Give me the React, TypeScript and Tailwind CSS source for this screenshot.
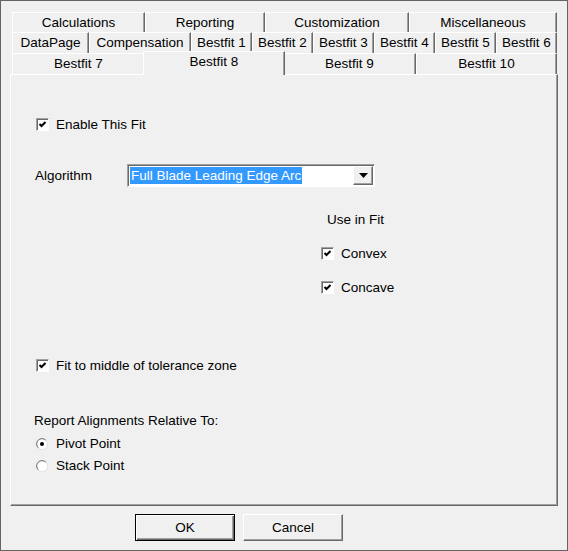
import React from 'react';

type Tab = { label: string; w: number; selected?: boolean };

const rows: Tab[][] = [
  [
    { label: 'Calculations', w: 133 },
    { label: 'Reporting', w: 120 },
    { label: 'Customization', w: 144 },
    { label: 'Miscellaneous', w: 148 },
  ],
  [
    { label: 'DataPage', w: 77 },
    { label: 'Compensation', w: 102 },
    { label: 'Bestfit 1', w: 61 },
    { label: 'Bestfit 2', w: 61 },
    { label: 'Bestfit 3', w: 61 },
    { label: 'Bestfit 4', w: 61 },
    { label: 'Bestfit 5', w: 61 },
    { label: 'Bestfit 6', w: 61 },
  ],
  [
    { label: 'Bestfit 7', w: 133 },
    { label: 'Bestfit 8', w: 138, selected: true },
    { label: 'Bestfit 9', w: 133 },
    { label: 'Bestfit 10', w: 141 },
  ],
];

function TabButton({ tab }: { tab: Tab }) {
  if (tab.selected) {
    return (
      <div
        className="relative z-10 -mx-[2px] -mt-[2px] -mb-[1px] flex h-[24px] items-start justify-center border-l border-t border-r border-l-white border-t-white border-r-[#696969] bg-[#f0f0f0] pt-[2px] shadow-[inset_-1px_0_0_#a0a0a0]"
        style={{ width: tab.w + 4 }}
      >
        {tab.label}
      </div>
    );
  }
  return (
    <div
      className="flex h-full items-center justify-center border-l border-t border-r border-l-white border-t-white border-r-[#696969] shadow-[inset_-1px_0_0_#a0a0a0]"
      style={{ width: tab.w }}
    >
      {tab.label}
    </div>
  );
}

function CheckBox({ checked = true }: { checked?: boolean }) {
  return (
    <div className="h-[13px] w-[13px] shrink-0 border border-l-[#a0a0a0] border-t-[#a0a0a0] border-r-white border-b-white bg-white shadow-[inset_1px_1px_0_#696969]">
      {checked && (
        <svg width="11" height="11" viewBox="0 0 11 11" className="block">
          <polyline points="2.5,5 4.5,7 8.5,3" fill="none" stroke="#000" strokeWidth="2" />
        </svg>
      )}
    </div>
  );
}

function Radio({ on }: { on?: boolean }) {
  return (
    <svg width="12" height="12" viewBox="0 0 12 12" className="shrink-0">
      <circle cx="6" cy="6" r="5" fill="#fff" stroke="none" />
      <path d="M2.2 9.8 A5.3 5.3 0 0 1 9.8 2.2" fill="none" stroke="#696969" strokeWidth="1" />
      <path d="M10.2 2.2 A5.6 5.6 0 0 1 2.2 10.2" fill="none" stroke="#e3e3e3" strokeWidth="1" />
      {on && <circle cx="6" cy="6" r="2" fill="#000" />}
    </svg>
  );
}

function CheckRow({ label, className = '' }: { label: string; className?: string }) {
  return (
    <div className={`flex h-[17px] items-center gap-[7px] ${className}`}>
      <CheckBox />
      <span>{label}</span>
    </div>
  );
}

function RadioRow({ label, on, className = '' }: { label: string; on?: boolean; className?: string }) {
  return (
    <div className={`flex h-[17px] items-center gap-[8px] ${className}`}>
      <Radio on={on} />
      <span>{label}</span>
    </div>
  );
}

function ComboBox() {
  return (
    <div className="flex h-[23px] w-[248px] items-center border border-l-[#a0a0a0] border-t-[#a0a0a0] border-r-white border-b-white bg-white shadow-[inset_1px_1px_0_#696969]">
      <div className="flex flex-1 items-center pl-[2px]">
        <span className="h-[17px] bg-[#3399ff] px-[1px] leading-[17px] text-white">Full Blade Leading Edge Arc</span>
      </div>
      <div className="mr-[1px] flex h-[19px] w-[20px] items-center justify-center border border-l-white border-t-white border-r-[#696969] border-b-[#696969] bg-[#f0f0f0] shadow-[inset_-1px_-1px_0_#a0a0a0]">
        <svg width="9" height="5" viewBox="0 0 9 5">
          <polygon points="0,0 9,0 4.5,5" fill="#000" />
        </svg>
      </div>
    </div>
  );
}

function Button({ label, isDefault }: { label: string; isDefault?: boolean }) {
  return (
    <div
      className={`flex h-[27px] w-[100px] items-center justify-center bg-[#f0f0f0] ${
        isDefault
          ? 'border border-[#000] shadow-[inset_1px_1px_0_#fff,inset_-1px_-1px_0_#696969,inset_-2px_-2px_0_#a0a0a0]'
          : 'border border-l-white border-t-white border-r-[#696969] border-b-[#696969] shadow-[inset_-1px_-1px_0_#a0a0a0]'
      }`}
    >
      {label}
    </div>
  );
}

export default function App() {
  return (
    <div
      className="relative h-[551px] w-[568px] border border-[#646464] bg-[#f0f0f0] pl-[9px] pt-[11px] text-[13.5px] leading-[16px] text-black"
      style={{ fontFamily: '"Liberation Sans", Arial, sans-serif' }}
    >
      <div className="ml-[2px] flex w-[545px] flex-col">
        <div className="flex h-[20px]">
          {rows[0].map((t) => (
            <TabButton key={t.label} tab={t} />
          ))}
        </div>
        <div className="flex h-[21px]">
          {rows[1].map((t) => (
            <TabButton key={t.label} tab={t} />
          ))}
        </div>
        <div className="flex h-[21px] items-end">
          {rows[2].map((t) => (
            <TabButton key={t.label} tab={t} />
          ))}
        </div>
      </div>

      <div className="flex h-[432px] w-[548px] flex-col border border-l-white border-t-white border-r-[#696969] border-b-[#696969] pl-[24px] shadow-[inset_-1px_-1px_0_#a0a0a0]">
        <CheckRow label="Enable This Fit" className="ml-[1px] mt-[41px]" />

        <div className="mt-[31px] flex items-center">
          <span className="w-[92px]">Algorithm</span>
          <ComboBox />
        </div>

        <div className="ml-[292px] mt-[25px]">Use in Fit</div>
        <CheckRow label="Convex" className="ml-[286px] mt-[17px]" />
        <CheckRow label="Concave" className="ml-[286px] mt-[17px]" />

        <CheckRow label="Fit to middle of tolerance zone" className="ml-[1px] mt-[61px]" />

        <div className="-ml-[1px] mt-[39px]">Report Alignments Relative To:</div>
        <RadioRow label="Pivot Point" on className="ml-[1px] mt-[6px]" />
        <RadioRow label="Stack Point" className="ml-[1px] mt-[5px]" />
      </div>

      <div className="ml-[125px] mt-[8px] flex gap-[8px]">
        <Button label="OK" isDefault />
        <Button label="Cancel" />
      </div>
    </div>
  );
}
